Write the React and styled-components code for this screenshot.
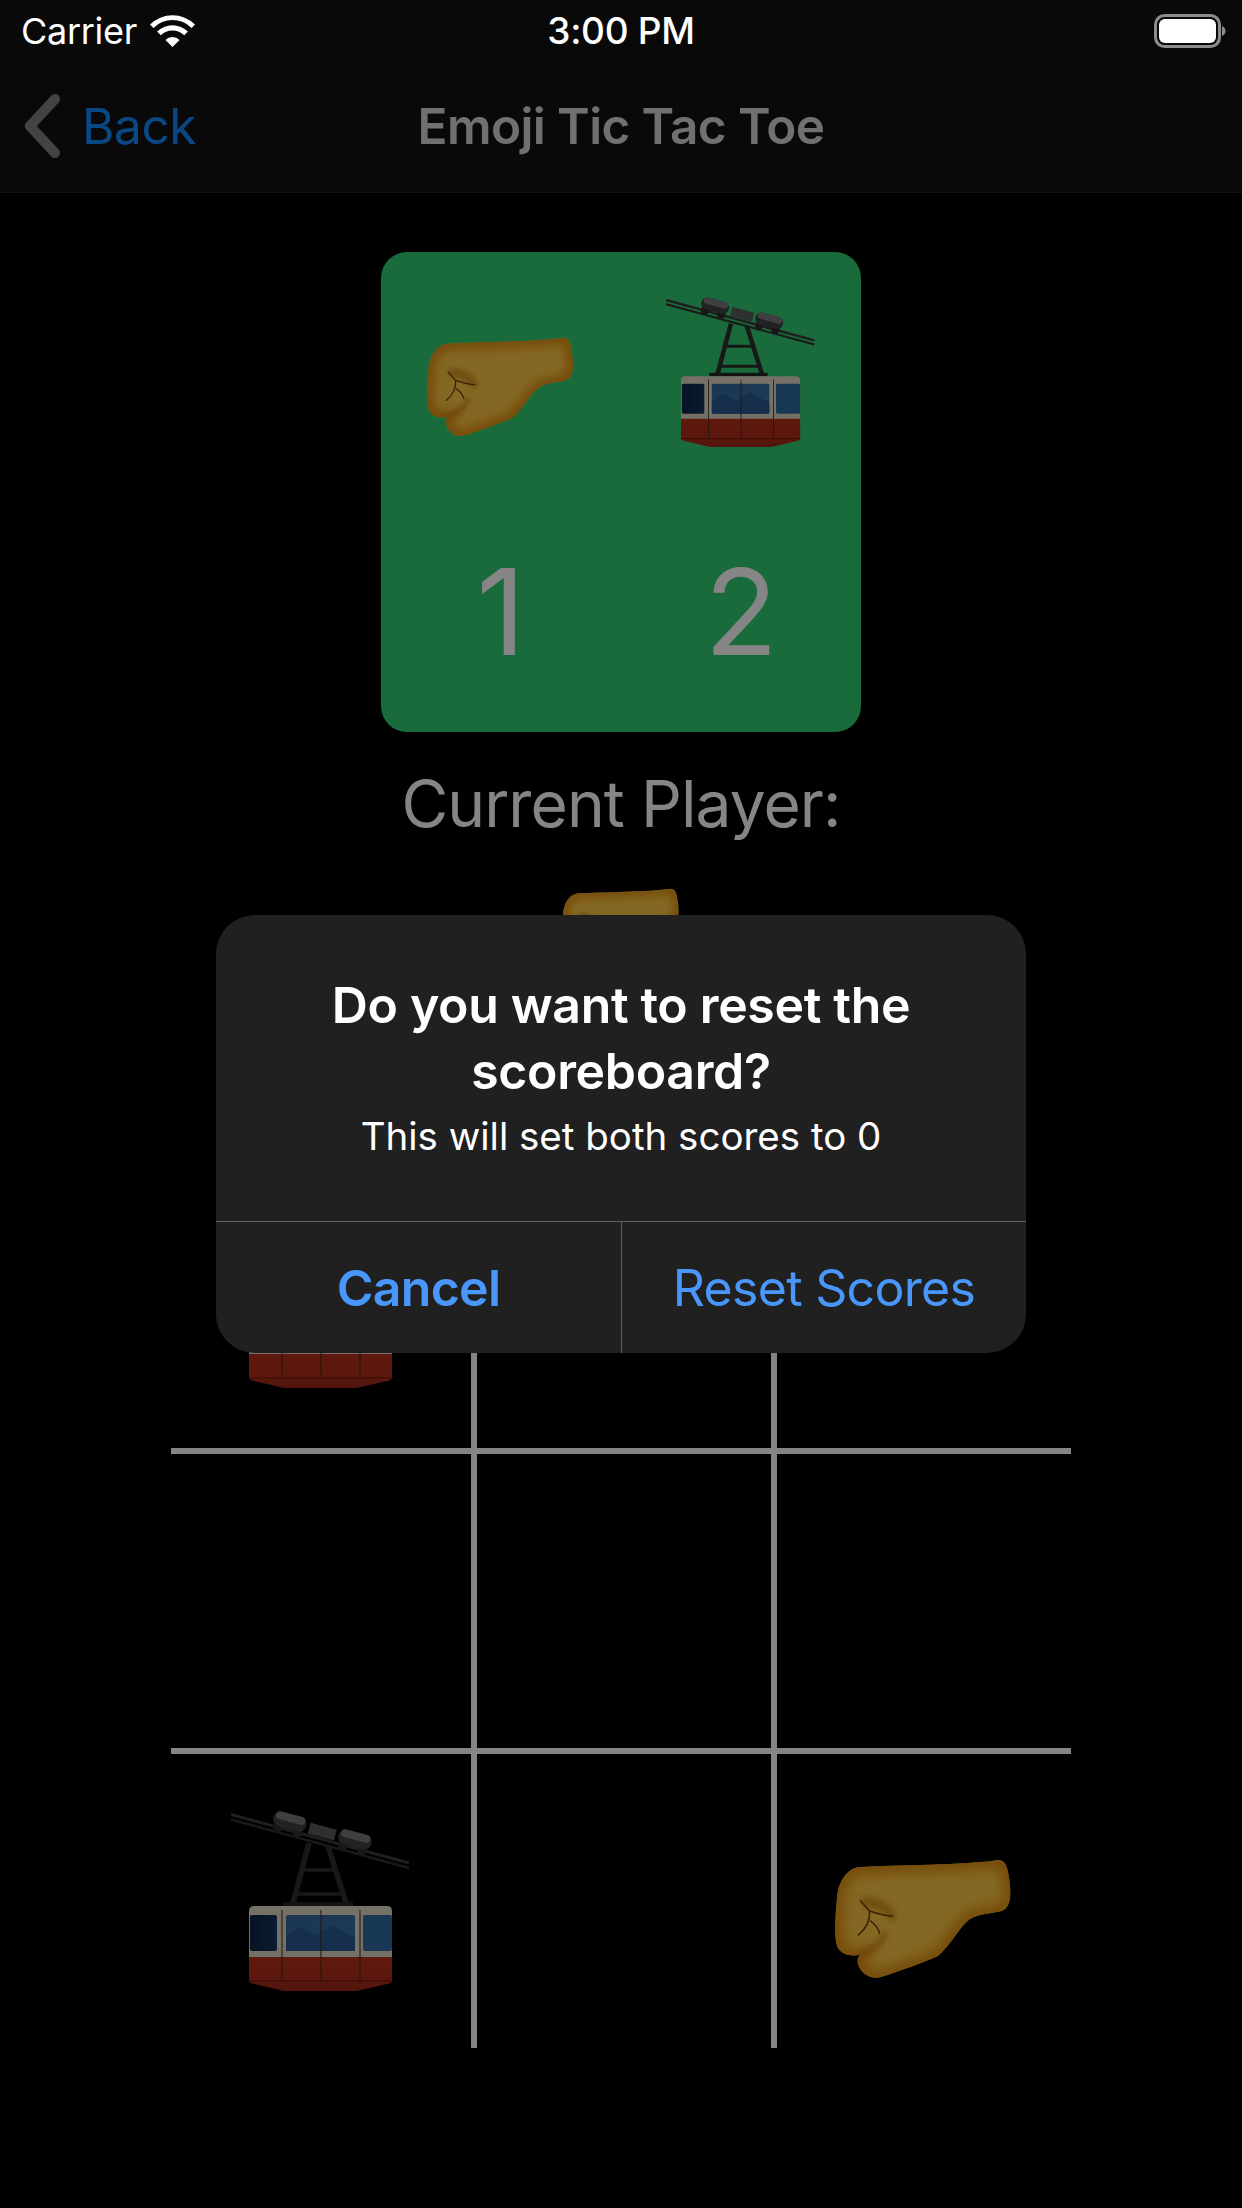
import React from 'react';
import styled, { createGlobalStyle } from 'styled-components';

const GlobalStyle = createGlobalStyle`
  html, body {
    margin: 0;
    padding: 0;
    background: #000;
  }
  * {
    box-sizing: border-box;
  }
`;

const Page = styled.div`
  position: relative;
  width: 1242px;
  height: 2208px;
  overflow: hidden;
  background: #000;
  font-family: Inter, "Liberation Sans", sans-serif;
`;
const Header = styled.div`
  height: 193px;
  background: #131313;
  border-bottom: 1px solid #242424;
`;
const StatusBar = styled.div`
  position: relative;
  z-index: 3;
  height: 60px;
  padding: 1px 16px 0;
  display: grid;
  grid-template-columns: 1fr auto 1fr;
  align-items: center;
  color: #fff;
  font-size: 36px;
`;
const Carrier = styled.div`
  display: flex;
  align-items: center;
  gap: 13px;
  padding-left: 5px;
  letter-spacing: -0.3px;
`;
const Clock = styled.div`
  font-weight: 500;
  font-size: 37px;
  letter-spacing: -0.3px;
`;
const Battery = styled.svg`
  justify-self: end;
  display: block;
`;
const NavBar = styled.div`
  height: 132px;
  display: grid;
  grid-template-columns: 1fr auto 1fr;
  align-items: center;
  padding: 0 24px;
  font-size: 49.5px;
`;
const BackLink = styled.div`
  display: flex;
  align-items: center;
  gap: 22px;
  color: #128aff;
  letter-spacing: -0.4px;
`;
const NavTitle = styled.div`
  color: #d6d6d6;
  font-weight: 600;
  letter-spacing: -0.6px;
`;
const Content = styled.div`
  display: flex;
  flex-direction: column;
  align-items: center;
  padding-top: 59px;
`;
const ScoreCard = styled.div`
  width: 480px;
  height: 480px;
  border-radius: 26px;
  background: #32ce73;
  display: grid;
  grid-template-columns: 1fr 1fr;
  grid-template-rows: 1fr 1fr;
  justify-items: center;
  align-items: center;
`;
const Score = styled.div`
  color: #fff;
  font-size: 120px;
  font-weight: 400;
  line-height: 1;
`;
const Label = styled.div`
  margin-top: 37px;
  color: #fff;
  font-size: 64px;
  line-height: 70px;
  letter-spacing: -0.9px;
`;
const CurrentEmoji = styled.div`
  margin-top: 17px;
  height: 120px;
`;
const Board = styled.div`
  margin-top: 172px;
  display: grid;
  grid-template-columns: repeat(3, 300px);
  grid-template-rows: repeat(3, 300px);
`;
const Cell = styled.div`
  display: flex;
  align-items: center;
  justify-content: center;
  border-left: ${(p) => (p.$col > 0 ? '6px solid #fff' : 'none')};
  border-top: ${(p) => (p.$row > 0 ? '6px solid #fff' : 'none')};
`;
const Overlay = styled.div`
  position: absolute;
  inset: 0;
  z-index: 2;
  background: rgba(0, 0, 0, 0.48);
  padding-top: 915px;
  display: flex;
  justify-content: center;
  align-items: flex-start;
`;
const Dialog = styled.div`
  width: 810px;
  height: 438px;
  border-radius: 39px;
  background: #202020;
  overflow: hidden;
  display: flex;
  flex-direction: column;
`;
const DialogBody = styled.div`
  height: 307px;
  padding-top: 57px;
  text-align: center;
  color: #fff;
  border-bottom: 1px solid #626262;
`;
const DialogTitle = styled.div`
  font-size: 50px;
  line-height: 66px;
  font-weight: 600;
  letter-spacing: -0.33px;
  padding: 0 50px;
`;
const DialogMessage = styled.div`
  margin-top: 7px;
  font-size: 38.5px;
  line-height: 50px;
`;
const DialogActions = styled.div`
  flex: 1;
  display: grid;
  grid-template-columns: 1fr 1fr;
`;
const DialogButton = styled.div`
  display: flex;
  align-items: center;
  justify-content: center;
  color: #4a97fb;
  font-size: 50px;
  letter-spacing: -0.7px;
  font-weight: ${(p) => (p.$bold ? 600 : 400)};
  border-left: ${(p) => (p.$bold ? 'none' : '1px solid #626262')};
`;

function Wifi() {
  return (
    <svg width="45" height="32" viewBox="0 0 45 32" fill="#fff">
      <path d="M22.5 32 L15.4 24.9 A10 10 0 0 1 29.6 24.9 Z" />
      <path d="M10.8 20.3 A16.6 16.6 0 0 1 34.2 20.3 L37.9 16.6 A21.8 21.8 0 0 0 7.1 16.6 Z" />
      <path d="M3.4 12.9 A27 27 0 0 1 41.6 12.9 L45 9.5 A32 32 0 0 0 0 9.5 Z" />
    </svg>
  );
}

function Chevron() {
  return (
    <svg width="36" height="64" viewBox="0 0 36 64" fill="none">
      <path d="M31 5 L6 32 L31 59" stroke="#808080" strokeWidth="10" strokeLinecap="round" strokeLinejoin="round" />
    </svg>
  );
}

const FIST_OUTLINE =
  'M165.5 49 C172.5 49 174.5 55 175.5 61 C177.5 71 178.5 81 177.5 87 C176.5 96 172.5 100 164.5 101 C152.5 103 144.5 104 137.5 108 C127.5 115 117.5 135 105.5 145 C92.5 151 64.5 161 48.5 166 C38.5 169 28.5 163 25.5 153 C24.5 149 25.5 146 27.5 144 C20.5 145 10.5 145 5.5 137 C1.5 129 2.5 109 4.5 87 C5.5 71 14.5 57 27.5 56 C62.5 54 132.5 54 165.5 49 Z';

// soft inner edge and thumb creases follow the emoji, coordinates are in a 180 box
function Fist({ size }) {
  return (
    <svg width={size} height={size} viewBox="1.5 0 180 180">
      <defs>
        <filter id="fistEdge" x="-30%" y="-30%" width="160%" height="160%">
          <feGaussianBlur stdDeviation="6" />
        </filter>
        <filter id="fistSoft" x="-30%" y="-30%" width="160%" height="160%">
          <feGaussianBlur stdDeviation="2.5" />
        </filter>
        <clipPath id="fistClip">
          <path d={FIST_OUTLINE} />
        </clipPath>
      </defs>
      <path d={FIST_OUTLINE} fill="#fcc544" />
      <g clipPath="url(#fistClip)">
        <path d={FIST_OUTLINE} fill="none" stroke="#e08c0e" strokeWidth="14" filter="url(#fistEdge)" />
        <path d="M27 86 C40 84 56 88 64 104 L60 112 C52 100 42 96 34 98 Z" fill="#c47a0c" opacity="0.6" filter="url(#fistSoft)" />
        <path d="M27 144 C38 140 48 132 53 122" fill="none" stroke="#c47a0c" strokeWidth="5" opacity="0.7" filter="url(#fistSoft)" />
      </g>
      <path d="M28 90 L37 100 C46 103 54 105 60 105 M37 100 C38 110 33 118 26 124 M38 110 C42 113 46 118 47 122" fill="none" stroke="#6b3c05" strokeWidth="1.5" strokeLinecap="round" />
    </svg>
  );
}

function Pulley({ x, y }) {
  return (
    <g transform={`rotate(15 ${x} ${y})`}>
      <circle cx={x - 10} cy={y + 9} r="5" fill="#2c2c2c" />
      <circle cx={x + 10} cy={y + 9} r="5" fill="#2c2c2c" />
      <rect x={x - 17} y={y - 7} width="34" height="15" rx="7.5" fill="#3f4144" />
      <rect x={x - 15} y={y - 7} width="30" height="8" rx="4" fill="#777a7e" />
    </g>
  );
}

function Gondola({ size }) {
  return (
    <svg width={size} height={size} viewBox="2 0 180 180">
      <defs>
        <linearGradient id="carRed" x1="0" y1="0" x2="0" y2="1">
          <stop offset="0" stopColor="#b7301d" />
          <stop offset="0.7" stopColor="#b02e1b" />
          <stop offset="1" stopColor="#98281a" />
        </linearGradient>
        <linearGradient id="windowBlue" x1="0" y1="0" x2="1" y2="1">
          <stop offset="0" stopColor="#36689f" />
          <stop offset="1" stopColor="#3a70a8" />
        </linearGradient>
        <linearGradient id="windowDark" x1="0" y1="0" x2="1" y2="0">
          <stop offset="0" stopColor="#0f2546" />
          <stop offset="1" stopColor="#16345f" />
        </linearGradient>
      </defs>
      <path d="M0 3 L180 52" stroke="#3c3c3c" strokeWidth="3" />
      <path d="M0 8 L180 57" stroke="#303030" strokeWidth="2.5" />
      <Pulley x={61} y={10} />
      <Pulley x={126} y={28} />
      <rect x="80" y="15" width="27" height="11" fill="#5a5d60" transform="rotate(15 93 20)" />
      <g stroke="#2f2f2f" fill="none">
        <path d="M80 32 L64 92 M99 35 L117 92" strokeWidth="5.5" />
        <path d="M73 59 L105 59 M67 83 L113 83" strokeWidth="3.5" />
      </g>
      <rect x="54" y="91" width="70" height="4" fill="#262626" />
      <path d="M20 100 Q20 95 25 95 L158 95 Q163 95 163 100 L163 148 L20 148 Z" fill="#e0d8c6" />
      <rect x="21" y="104" width="27" height="36" rx="2" fill="url(#windowDark)" />
      <rect x="57" y="104" width="69" height="36" rx="2" fill="url(#windowBlue)" />
      <path d="M57 125 L72 116 L86 124 L104 115 L126 127 L126 140 L57 140 Z" fill="#2b5a92" />
      <rect x="134" y="104" width="29" height="36" rx="2" fill="#2f6ba6" />
      <path d="M20 146 L163 146 L163 169 Q163 172 158 173 L128 180 L55 180 L25 173 Q20 172 20 169 Z" fill="url(#carRed)" />
      <path d="M20 170 L163 170" stroke="#7d1e10" strokeWidth="1.5" />
      <path d="M53 99 L53 170 M92 99 L92 170 M131 99 L131 170" stroke="#3f2a20" strokeWidth="1" />
    </svg>
  );
}

export default function App() {
  return (
    <Page>
      <GlobalStyle />
      <Header>
        <StatusBar>
          <Carrier>
            Carrier
            <Wifi />
          </Carrier>
          <Clock>3:00 PM</Clock>
          <Battery width="72" height="34" viewBox="0 0 72 34">
            <rect x="1.5" y="1.5" width="64" height="31" rx="9" fill="none" stroke="#8c8c8c" strokeWidth="3" />
            <rect x="5" y="5" width="57" height="24" rx="6" fill="#fff" />
            <path d="M68 12 C70.5 13 71.5 15 71.5 17 C71.5 19 70.5 21 68 22 Z" fill="#8c8c8c" />
          </Battery>
        </StatusBar>
        <NavBar>
          <BackLink>
            <Chevron />
            Back
          </BackLink>
          <NavTitle>Emoji Tic Tac Toe</NavTitle>
        </NavBar>
      </Header>
      <Content>
        <ScoreCard>
          <Fist size={150} />
          <Gondola size={150} />
          <Score>1</Score>
          <Score>2</Score>
        </ScoreCard>
        <Label>Current Player:</Label>
        <CurrentEmoji>
          <Fist size={120} />
        </CurrentEmoji>
        <Board>
          <Cell $row={0} $col={0}><Gondola size={180} /></Cell>
          <Cell $row={0} $col={1} />
          <Cell $row={0} $col={2} />
          <Cell $row={1} $col={0} />
          <Cell $row={1} $col={1} />
          <Cell $row={1} $col={2} />
          <Cell $row={2} $col={0}><Gondola size={180} /></Cell>
          <Cell $row={2} $col={1} />
          <Cell $row={2} $col={2}><Fist size={180} /></Cell>
        </Board>
      </Content>
      <Overlay>
        <Dialog>
          <DialogBody>
            <DialogTitle>Do you want to reset the scoreboard?</DialogTitle>
            <DialogMessage>This will set both scores to 0</DialogMessage>
          </DialogBody>
          <DialogActions>
            <DialogButton $bold>Cancel</DialogButton>
            <DialogButton>Reset Scores</DialogButton>
          </DialogActions>
        </Dialog>
      </Overlay>
    </Page>
  );
}
